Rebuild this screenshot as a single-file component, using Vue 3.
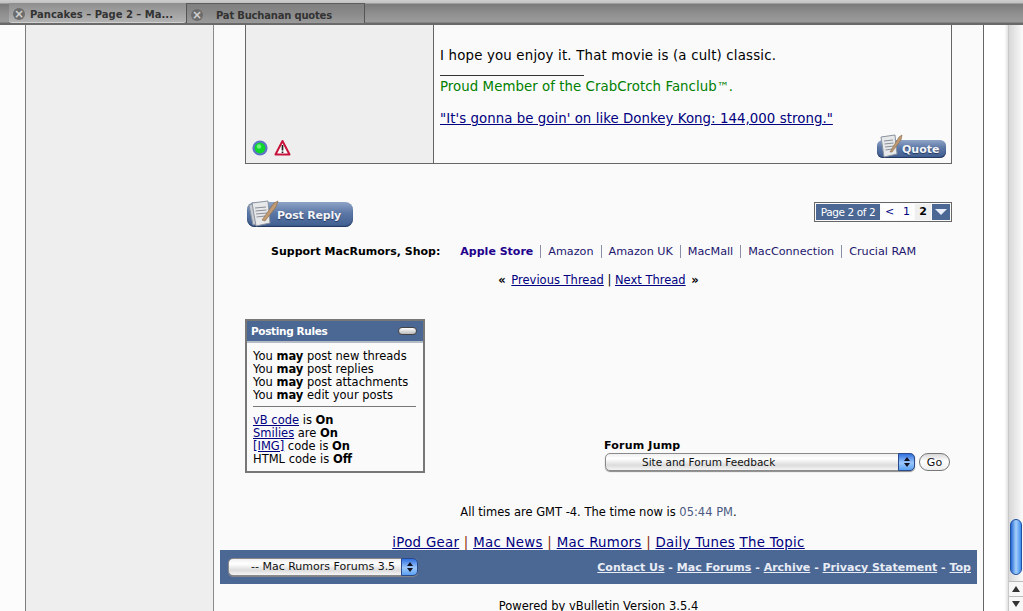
<script setup>
const shops = ['Amazon', 'Amazon UK', 'MacMall', 'MacConnection', 'Crucial RAM']
const may = ['post new threads', 'post replies', 'post attachments', 'edit your posts']
const footLinks = ['Contact Us', 'Mac Forums', 'Archive', 'Privacy Statement', 'Top']
</script>

<template>
  <div class="screen">
    <header class="tabbar">
      <div class="tab active">
        <span class="close">×</span><span class="tab-title">Pancakes – Page 2 – Ma...</span>
      </div>
      <div class="tab second">
        <span class="close">×</span><span class="tab-title indent">Pat Buchanan quotes</span>
      </div>
    </header>
    <div class="viewport">
      <div class="gutter"></div>
      <aside class="sidebar"></aside>
      <main class="content">
        <section class="post">
          <div class="post-side">
            <div class="status-icons">
              <svg width="16" height="16" viewBox="0 0 16 16">
                <circle cx="8" cy="8" r="7.6" fill="#5f73c8" />
                <circle cx="8" cy="8" r="5.4" fill="#0fd82c" />
                <circle cx="7" cy="6.500" r="2.200" fill="#6ff07f" />
              </svg>
              <svg class="warn" width="17" height="18" viewBox="0 0 17 18">
                <path d="M8.500 2 L15.500 15.500 L1.500 15.500 Z" fill="#fff" stroke="#c8143c" stroke-width="2" stroke-linejoin="round" />
                <path d="M8.500 6 V11.500 M8.500 12.600 V14" stroke="#222" stroke-width="1.700" />
              </svg>
            </div>
          </div>
          <div class="post-body">
            <p class="line">I hope you enjoy it. That movie is (a cult) classic.</p>
            <div class="sig-rule"></div>
            <p class="proud">Proud Member of the CrabCrotch Fanclub<span class="tm">™</span>.</p>
            <p class="kong"><a>"It's gonna be goin' on like Donkey Kong: 144,000 strong."</a></p>
            <div class="quote-row">
              <button class="pill quote">
                <svg class="doc" width="28" height="24" viewBox="0 0 28 24">
                  <path d="M4 3 L18 1 L20 20 L7 23 Z" fill="#e6e8ea" stroke="#8b93a0" />
                  <path d="M7 7 L16 6 M7.500 10 L16.500 9 M8 13 L17 12 M8.500 16 L15 15" stroke="#8a8f98" />
                  <path d="M13 18 L22 3 L25 1 L24 6 L15 18 Z" fill="#bf9a73" stroke="#8a6a4a" stroke-width=".6" />
                </svg>
                <span>Quote</span>
              </button>
            </div>
          </div>
        </section>

        <div class="actions">
          <button class="pill reply">
            <svg class="doc" width="34" height="28" viewBox="0 0 34 28">
              <path d="M2 6 L6 5 L10 25 L6 26 Z" fill="#c8ccd2" stroke="#8b93a0" />
              <path d="M5 4 L21 2 L23 24 L9 27 Z" fill="#e6e8ea" stroke="#8b93a0" />
              <path d="M8 9 L19 8 M8.500 12 L19.500 11 M9 15 L20 14 M9.500 18 L18 17" stroke="#8a8f98" />
              <path d="M15 21 L27 4 L31 2 L29 8 L18 22 Z" fill="#bf9a73" stroke="#8a6a4a" stroke-width=".6" />
            </svg>
            <span>Post Reply</span>
          </button>
          <nav class="pager">
            <span class="pg-label">Page 2 of 2</span>
            <a class="pg-cell prev">&lt;</a>
            <a class="pg-cell one">1</a>
            <span class="pg-cell current">2</span>
            <span class="pg-menu"><i></i></span>
          </nav>
        </div>

        <div class="shop">
          <strong class="shop-label">Support MacRumors, Shop:</strong>
          <a class="shop-link first">Apple Store</a>
          <a v-for="s in shops" :key="s" class="shop-link">{{ s }}</a>
        </div>

        <p class="thread-nav">
          <b class="chev-l">«</b> <a>Previous Thread</a> | <a>Next Thread</a> <b class="chev-r">»</b>
        </p>

        <div class="lower">
          <section class="rules">
            <div class="rules-head">
              <span>Posting Rules</span>
              <i class="collapse"></i>
            </div>
            <div class="rules-body">
              <div v-for="m in may" :key="m">You <b>may</b> {{ m }}</div>
              <hr />
              <div><a>vB code</a> is <b>On</b></div>
              <div><a>Smilies</a> are <b>On</b></div>
              <div><a>[IMG]</a> code is <b>On</b></div>
              <div>HTML code is <b>Off</b></div>
            </div>
          </section>
          <section class="jump">
            <div class="jump-title">Forum Jump</div>
            <div class="jump-row">
              <div class="select wide">
                <span class="select-text">Site and Forum Feedback</span>
                <span class="stepper"><i class="up"></i><i class="down"></i></span>
              </div>
              <button class="go">Go</button>
            </div>
          </section>
        </div>

        <p class="times">All times are GMT -4. The time now is <span class="now">05:44 PM</span>.</p>

        <p class="links">
          <a>iPod Gear</a> <em>|</em> <a>Mac News</a> <em>|</em> <a>Mac Rumors</a> <em>|</em> <a>Daily Tunes</a> <a>The Topic</a>
        </p>

        <footer class="footbar">
          <div class="select small">
            <span class="select-text">-- Mac Rumors Forums 3.5</span>
            <span class="stepper"><i class="up"></i><i class="down"></i></span>
          </div>
          <div class="foot-links">
            <template v-for="(l, i) in footLinks" :key="l">
              <span v-if="i"> - </span><a>{{ l }}</a>
            </template>
          </div>
        </footer>

        <p class="powered">Powered by vBulletin Version 3.5.4</p>
      </main>
      <div class="margin"></div>
      <div class="scrollbar">
        <div class="track"><div class="thumb"></div></div>
        <div class="arrow"><i class="a-up"></i></div>
        <div class="arrow"><i class="a-down"></i></div>
      </div>
    </div>
  </div>
</template>

<style>
html, body { margin: 0; height: 100%; overflow: hidden; background: #fff; }
</style>

<style scoped>
.screen {
  width: 1023px;
  height: 611px;
  overflow: hidden;
  display: flex;
  flex-direction: column;
  font-family: "DejaVu Sans", Verdana, sans-serif;
  font-size: 11.5px;
  color: #000;
}
a { color: #000080; text-decoration: underline; }
p { margin: 0; }

.tabbar {
  height: 25px;
  flex: none;
  box-sizing: border-box;
  display: flex;
  align-items: flex-start;
  padding: 3px 0 0 9px;
  background: linear-gradient(#cdcdcd 0, #c2c2c2 3px, #7a7a7a 4px, #8c8c8c 12px, #9c9c9c 22px, #6a6a6a 23px, #6a6a6a 25px);
}
.tab {
  height: 20px;
  box-sizing: border-box;
  display: flex;
  align-items: center;
  padding-top: 3px;
  color: #333;
  font: bold 10px "DejaVu Sans", sans-serif;
}
.active {
  width: 177px;
  height: 20px;
  padding-left: 4px;
  border-radius: 0 0 3px 3px;
  background: linear-gradient(#8e8e8e, #a0a0a0 50%, #b2b2b2);
  border-bottom: 1px solid #d0d0d0;
}
.second {
  width: 179px;
  padding-left: 4px;
  border-left: 1px solid #555;
  border-right: 1px solid #555;
  border-top: 1px solid #5d5d5d;
  background: linear-gradient(#7f7f7f, #8a8a8a 50%, #9a9a9a);
}
.close {
  width: 12px;
  height: 12px;
  border-radius: 50%;
  background: #6c6c6c;
  color: #d0d0d0;
  font: bold 12px/12px "DejaVu Sans", sans-serif;
  text-align: center;
  flex: none;
}
.tab-title { margin-left: 5px; white-space: nowrap; }
.indent { margin-left: 13px; letter-spacing: -.2px; }

.viewport {
  flex: 1;
  min-height: 0;
  display: flex;
  background: #fff;
}
.gutter { width: 25px; flex: none; border-right: 1px solid #7c7c7c; background: #fcfcfc; }
.sidebar { width: 187px; flex: none; background: #eeeeee; border-right: 1px solid #8a8a8a; }
.content {
  width: 770px;
  flex: none;
  box-sizing: border-box;
  border-right: 1px solid #666;
  background: #fafafa;
  padding: 0 6px;
  display: flex;
  flex-direction: column;
  overflow: hidden;
}
.margin { width: 24px; flex: none; background: linear-gradient(90deg, #fff 85%, #e2e2e2); }

.post {
  flex: none;
  display: flex;
  height: 139px;
  box-sizing: border-box;
  margin: 0 0 0 25px;
  border: 1px solid #666;
  border-top: 0;
  width: 707px;
}
.post-side {
  width: 187px;
  flex: none;
  background: #eeeeee;
  border-right: 1px solid #666;
  position: relative;
}
.status-icons {
  position: absolute;
  left: 6px;
  bottom: 6px;
  display: flex;
  align-items: center;
  gap: 6px;
}
.post-body { flex: 1; padding: 23px 6px 0; display: flex; flex-direction: column; font-size: 13.33px; }
.line { line-height: 16px; letter-spacing: .18px; }
.sig-rule { width: 144px; height: 1px; background: #333; margin-top: 11px; }
.proud { color: #008000; line-height: 16px; margin-top: 3px; letter-spacing: .05px; }
.tm { font-size: 12px; }
.kong { line-height: 16px; margin-top: 16px; letter-spacing: .05px; }
.quote-row { display: flex; justify-content: flex-end; margin-top: 13px; }

.pill {
  border: 0;
  padding: 0;
  color: #f2f4f8;
  font: bold 11px "DejaVu Sans", sans-serif;
  background: linear-gradient(#8ea3c7, #5b77a6 45%, #3f5d90);
  box-shadow: inset 0 -1px 1px #22375f;
  display: flex;
  align-items: center;
  position: relative;
}
.pill span { text-shadow: 0 1px 1px #24385f; }
.quote {
  width: 69px;
  height: 18px;
  border-radius: 6px;
  padding: 0 0 0 25px;
  box-sizing: border-box;
  margin-right: -1px;
}
.reply {
  width: 106px;
  height: 25px;
  border-radius: 8px;
  padding: 2px 0 0 30px;
  box-sizing: border-box;
  letter-spacing: -.2px;
}
.doc { position: absolute; left: 0; bottom: 0; }

.actions {
  flex: none;
  display: flex;
  justify-content: space-between;
  align-items: flex-start;
  width: 705px;
  margin: 38px 0 0 27px;
  height: 25px;
}
.pager {
  display: flex;
  height: 20px;
  box-sizing: border-box;
  border: 1px solid #666;
  background: #fafafa;
  padding: 1px;
  gap: 1px;
  font-size: 11px;
  line-height: 16px;
  width: 138px;
}
.pg-label {
  background: #4b6794;
  color: #fff;
  width: 64px;
  flex: none;
  text-align: center;
  font-size: 10.5px;
  letter-spacing: -.4px;
  white-space: nowrap;
}
.pg-cell {
  width: 16px;
  flex: none;
  text-align: center;
  text-decoration: none;
  color: #000080;
  background: #fdfdfd;
}
.prev { width: 17px; }
.one { width: 15px; }
.current { background: #efefef; color: #000; font-weight: bold; }
.pg-menu {
  flex: 1;
  background: #4b6794;
  display: flex;
  align-items: center;
  justify-content: center;
}
.pg-menu i {
  width: 0;
  height: 0;
  border-left: 6px solid transparent;
  border-right: 6px solid transparent;
  border-top: 6px solid #e8eefa;
}

.shop {
  flex: none;
  display: flex;
  align-items: center;
  margin: 18px 0 0 51px;
  height: 13px;
  white-space: nowrap;
}
.shop-label { margin-right: 20px; font-size: 11px; color: #000; }
.shop-link {
  text-decoration: none;
  color: #22166e;
  font-size: 11.2px;
  padding-right: 7px;
  margin-right: 7px;
  border-right: 1px solid #8a8fa8;
}
.shop-link:last-child { border-right: 0; }
.first { font-weight: bold; font-size: 11px; color: #22008c; }

.thread-nav {
  flex: none;
  text-align: center;
  line-height: 14px;
  margin-top: 15px;
}
.chev-l { margin-right: 2px; }
.chev-r { margin-left: 2px; }

.lower {
  flex: none;
  display: flex;
  align-items: flex-end;
  margin: 32px 0 0 25px;
}
.rules {
  width: 180px;
  height: 154px;
  box-sizing: border-box;
  border: 2px solid #777;
  background: #fafafa;
}
.rules-head {
  height: 22px;
  box-sizing: border-box;
  background: #4b6794;
  color: #fff;
  font-weight: bold;
  font-size: 10.5px;
  letter-spacing: -.35px;
  display: flex;
  align-items: center;
  justify-content: space-between;
  padding: 0 6px 0 4px;
  border-bottom: 2px solid #b6bcc6;
}
.collapse {
  width: 17px;
  height: 6px;
  border: 1px solid #444;
  border-radius: 4px;
  background: linear-gradient(#fff, #bbb);
}
.rules-body { padding: 7px 6px 0; line-height: 13px; white-space: nowrap; }
.rules-body hr {
  border: 0;
  height: 1px;
  background: #777;
  margin: 4px 1px 7px 0;
}
.jump { margin-left: 179px; padding-bottom: 2px; }
.jump-title { font-weight: bold; font-size: 11px; line-height: 13px; letter-spacing: .2px; }
.jump-row { display: flex; align-items: center; gap: 4px; margin-top: 1px; margin-left: 1px; }
.select {
  box-sizing: border-box;
  height: 18px;
  position: relative;
  border-radius: 5px;
  border: 1px solid #8a8a8a;
  background: linear-gradient(#f0f0f0, #fff 30%, #dcdcdc 70%, #f4f4f4);
  color: #111;
  font-size: 10.5px;
  line-height: 16px;
  box-shadow: 0 1px 1px #888;
}
.wide { width: 310px; }
.small { width: 190px; }
.select-text { display: block; padding-left: 36px; white-space: nowrap; }
.small .select-text { padding-left: 22px; font-size: 11px; }
.stepper {
  position: absolute;
  top: -1px;
  right: -1px;
  bottom: -1px;
  width: 17px;
  border-radius: 0 5px 5px 0;
  background: linear-gradient(#2f6fe0, #9cc7fb 55%, #5aa0f2);
  border: 1px solid #2a4a8c;
  box-sizing: border-box;
  display: flex;
  flex-direction: column;
  align-items: center;
  justify-content: center;
  gap: 2px;
}
.stepper i { width: 0; height: 0; border-left: 3px solid transparent; border-right: 3px solid transparent; }
.stepper .up { border-bottom: 4px solid #112; }
.stepper .down { border-top: 4px solid #112; }
.go {
  width: 31px;
  height: 18px;
  padding: 0;
  border-radius: 9px;
  border: 1px solid #777;
  background: linear-gradient(#d8d8d8, #fff 45%, #eee);
  font: 11px "DejaVu Sans", sans-serif;
  color: #111;
}

.times { flex: none; text-align: center; margin-top: 33px; line-height: 13px; }
.now { color: #4c5a82; }

.links { flex: none; text-align: center; font-size: 13.33px; letter-spacing: .3px; line-height: 15px; margin-top: 16px; }
.links em { font-style: normal; color: #8b2d0d; }
.footbar {
  flex: none;
  height: 34px;
  background: #4b6794;
  display: flex;
  align-items: center;
  justify-content: space-between;
  padding: 0 6px 0 8px;
  width: 757px;
  box-sizing: border-box;
}
.foot-links { color: #e8ecf5; font-size: 11px; font-weight: bold; white-space: pre; }
.foot-links a { color: #e8ecf5; }
.powered { flex: none; text-align: center; margin-top: 16px; line-height: 13px; }

.scrollbar {
  width: 15px;
  flex: none;
  display: flex;
  flex-direction: column;
  background: linear-gradient(90deg, #d8d8d8, #fafafa);
  border-left: 1px solid #c8c8c8;
  box-sizing: border-box;
}
.track { flex: 1; display: flex; flex-direction: column; justify-content: flex-end; padding-bottom: 2px; }
.thumb {
  height: 56px;
  margin: 0 1px 4px 1px;
  border-radius: 7px;
  background: linear-gradient(90deg, #2469d8, #a7d0fa 50%, #3f8dee);
  border: 1px solid #20509f;
  box-sizing: border-box;
}
.arrow {
  height: 14px;
  flex: none;
  background: #f7f7f7;
  border-top: 1px solid #bbb;
  display: flex;
  align-items: center;
  justify-content: center;
}
.a-up { width: 0; height: 0; border-left: 4px solid transparent; border-right: 4px solid transparent; border-bottom: 6px solid #333; }
.a-down { width: 0; height: 0; border-left: 4px solid transparent; border-right: 4px solid transparent; border-top: 6px solid #333; }
</style>
